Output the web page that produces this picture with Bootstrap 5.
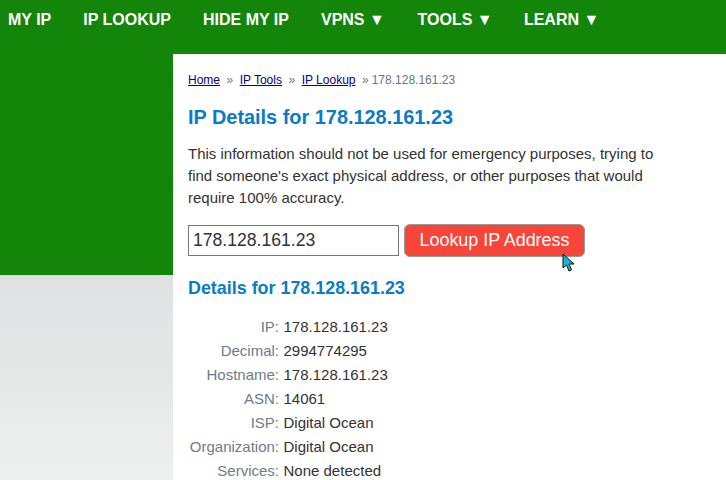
<!DOCTYPE html>
<html lang="en">
<head>
<meta charset="utf-8">
<title>IP Details</title>
<link href="https://cdn.jsdelivr.net/npm/bootstrap@5.3.0/dist/css/bootstrap.min.css" rel="stylesheet">
<style>
html, body { height: 480px; overflow: hidden; }
body { font-family: "Liberation Sans", Arial, sans-serif; background: linear-gradient(#dfe1e2 275px, #eef0ef 480px); color: #333; font-size: 15px; position: relative; }
.hero-band { background: #138508; height: 275px; }
.top-menu { height: 54px; padding-top: 9.5px; gap: 32px; padding-left: 8px; }
.top-menu a { color: #fff; font-weight: 700; font-size: 16px; line-height: 20px; text-decoration: none; }
.top-menu a:nth-child(5) { margin-left: .7px; margin-right: -.7px; }
.page-panel { background: #fff; position: absolute; top: 54px; left: 173px; width: 553px; height: 426px; padding: 18px 15px 0; }
.crumbs { font-size: 12px; line-height: 16px; color: #6c757d; margin-bottom: 16px; }
.crumbs a { color: #00008b; text-decoration: underline; }
.crumbs .sep { margin: 0 6.5px; color: #777; }
.crumbs .sep-last { margin: 0 3px 0 6.5px; color: #777; }
.main-title { font-size: 19.9px; line-height: 26px; font-weight: 700; color: #0a7cc4; margin-bottom: 13px; }
.notice { font-size: 15px; line-height: 22px; color: #333; width: 480px; margin-bottom: 15px; }
.lookup-field { width: 211px; height: 31px; border: 1px solid #777; font-size: 17.6px; padding: 0 4px; color: #333; font-family: inherit; background: #fff; }
.lookup-btn { width: 181px; height: 33px; background: #f8453a; border: 1px solid #9a9a9a; border-radius: 6px; color: #fff; font-size: 17.9px; padding: 0; margin-left: 5px; font-family: inherit; }
.sub-title { font-size: 17.9px; line-height: 24px; font-weight: 700; color: #0a7cc4; margin: 19px 0 15px; }
.info-row { line-height: 24px; font-size: 15px; height: 24px; }
.info-key { width: 91px; text-align: right; color: #6f7c87; margin-right: 4.5px; flex: none; white-space: nowrap; }
.info-val { color: #333; }
.pointer-mark { position: absolute; left: 562px; top: 253px; width: 14px; height: 20px; }
</style>
</head>
<body>
<div class="hero-band">
  <nav class="top-menu d-flex align-items-start">
    <a href="#">MY IP</a><a href="#">IP LOOKUP</a><a href="#">HIDE MY IP</a><a href="#">VPNS ▼</a><a href="#">TOOLS ▼</a><a href="#">LEARN ▼</a>
  </nav>
</div>
<main class="page-panel">
  <div class="crumbs d-flex">
    <a href="#">Home</a><span class="sep">»</span><a href="#">IP Tools</a><span class="sep">»</span><a href="#">IP Lookup</a><span class="sep-last">»</span><span>178.128.161.23</span>
  </div>
  <h1 class="main-title">IP Details for 178.128.161.23</h1>
  <p class="notice">This information should not be used for emergency purposes, trying to find someone's exact physical address, or other purposes that would require 100% accuracy.</p>
  <form class="d-flex align-items-center">
    <input class="lookup-field" type="text" value="178.128.161.23" aria-label="IP address">
    <button class="lookup-btn" type="button">Lookup IP Address</button>
  </form>
  <h2 class="sub-title">Details for 178.128.161.23</h2>
  <div class="info-row d-flex"><span class="info-key">IP:</span><span class="info-val">178.128.161.23</span></div>
  <div class="info-row d-flex"><span class="info-key">Decimal:</span><span class="info-val">2994774295</span></div>
  <div class="info-row d-flex"><span class="info-key">Hostname:</span><span class="info-val">178.128.161.23</span></div>
  <div class="info-row d-flex"><span class="info-key">ASN:</span><span class="info-val">14061</span></div>
  <div class="info-row d-flex"><span class="info-key">ISP:</span><span class="info-val">Digital Ocean</span></div>
  <div class="info-row d-flex"><span class="info-key">Organization:</span><span class="info-val">Digital Ocean</span></div>
  <div class="info-row d-flex"><span class="info-key">Services:</span><span class="info-val">None detected</span></div>
</main>
<svg class="pointer-mark" viewBox="0 0 14 20" aria-hidden="true"><path d="M1 1 L1 15 L4.5 12 L7 18 L9.5 17 L7 11 L12 11 Z" fill="#18b4d6" stroke="#111" stroke-width="1"/></svg>
<script src="https://cdn.jsdelivr.net/npm/bootstrap@5.3.0/dist/js/bootstrap.bundle.min.js"></script>
</body>
</html>
